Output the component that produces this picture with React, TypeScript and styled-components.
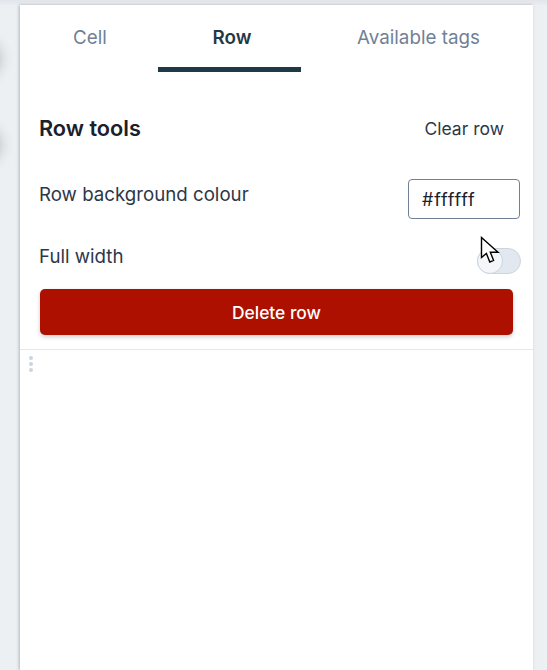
import { createGlobalStyle, styled } from 'styled-components'

const tabs = [
  { label: 'Cell', width: 138, indent: 2 },
  { label: 'Row', width: 143, indent: 5 },
  { label: 'Available tags', width: 232, indent: 3 },
]

function CursorIcon() {
  return (
    <Cursor width="22" height="30" viewBox="0 0 22 30" aria-hidden="true">
      <path
        d="M1.5 1.5 L1.5 21.5 L6.4 17.4 L9.8 26 L13.6 24.4 L10.3 16.2 L18 16.2 Z"
        fill="#ffffff"
        stroke="#000000"
        strokeWidth="1.4"
        strokeLinejoin="miter"
      />
    </Cursor>
  )
}

export default function App() {
  return (
    <>
      <GlobalStyle />
      <Page>
        <TopEdge />
        <Blob $top={46} />
        <Blob $top={132} />
        <Panel>
          <TabBar>
            {tabs.map((tab) => (
              <Tab
                key={tab.label}
                $width={tab.width}
                $indent={tab.indent}
                $active={tab.label === 'Row'}
              >
                {tab.label}
              </Tab>
            ))}
          </TabBar>
          <Tools>
            <ToolsHeader>
              <Heading>Row tools</Heading>
              <ClearButton type="button">Clear row</ClearButton>
            </ToolsHeader>
            <ColourRow>
              <FieldLabel>Row background colour</FieldLabel>
              <ColourInput readOnly value="#ffffff" />
            </ColourRow>
            <WidthRow>
              <FieldLabel>Full width</FieldLabel>
              <Switch>
                <Knob />
                <CursorIcon />
              </Switch>
            </WidthRow>
            <DeleteButton type="button">Delete row</DeleteButton>
          </Tools>
          <RowArea>
            <DragHandle>
              <Dot />
              <Dot />
              <Dot />
            </DragHandle>
          </RowArea>
        </Panel>
      </Page>
    </>
  )
}

const GlobalStyle = createGlobalStyle`
  html, body {
    margin: 0;
    padding: 0;
    height: 100%;
    overflow: hidden;
  }

  body {
    font-family: Inter, "Liberation Sans", sans-serif;
    background: #ecf0f3;
  }
`

const Page = styled.div`
  position: relative;
  height: 670px;
  padding: 5px 14px 0 20px;
  box-sizing: border-box;
  overflow: hidden;
  background: #ecf0f3;
`

const TopEdge = styled.div`
  position: absolute;
  inset: 0 0 auto 0;
  height: 5px;
  background: linear-gradient(#e2e5e9, #e9ecf0);
`

const Blob = styled.div<{ $top: number }>`
  position: absolute;
  left: -30px;
  top: ${({ $top }) => $top}px;
  width: 26px;
  height: 26px;
  border-radius: 50%;
  box-shadow: 0 0 14px 4px rgba(60, 60, 60, 0.32);
`

const Panel = styled.main`
  position: relative;
  height: 100%;
  background: #ffffff;
  box-shadow: -1px 0 3px rgba(70, 80, 95, 0.35);
`

const TabBar = styled.nav`
  display: flex;
  height: 67px;
`

const Tab = styled.div<{ $width: number; $indent: number; $active: boolean }>`
  box-sizing: border-box;
  width: ${({ $width }) => $width}px;
  height: 67px;
  padding-left: ${({ $indent }) => $indent}px;
  line-height: 65px;
  text-align: center;
  font-size: 18.8px;
  font-weight: ${({ $active }) => ($active ? 600 : 400)};
  color: ${({ $active }) => ($active ? '#1f3a47' : '#718096')};
  border-bottom: 5px solid ${({ $active }) => ($active ? '#1f3a47' : 'transparent')};
`

const Tools = styled.section`
  display: flex;
  flex-direction: column;
  padding: 5px 13px 14px 19px;
  border-bottom: 1px solid #e2e8f0;
`

const ToolsHeader = styled.div`
  display: flex;
  align-items: center;
  justify-content: space-between;
  height: 102px;
  padding-right: 16px;
`

const Heading = styled.h2`
  margin: 0;
  font-size: 21.7px;
  font-weight: 600;
  color: #1a202c;
`

const ClearButton = styled.button`
  padding: 0;
  border: 0;
  background: none;
  font: inherit;
  font-size: 17.5px;
  color: #2d3748;
`

const ColourRow = styled.div`
  display: flex;
  align-items: flex-start;
  justify-content: space-between;
`

const FieldLabel = styled.span`
  font-size: 18.7px;
  line-height: 32px;
  color: #2d3748;
`

const ColourInput = styled.input`
  box-sizing: border-box;
  width: 112px;
  height: 40px;
  padding: 0 13px;
  border: 1px solid #718096;
  border-radius: 4px;
  outline: none;
  font: inherit;
  font-size: 18px;
  letter-spacing: 0.8px;
  color: #1a202c;
`

const WidthRow = styled.div`
  display: flex;
  align-items: center;
  justify-content: space-between;
  height: 30px;
  margin-top: 23px;
  margin-bottom: 17px;
`

const Switch = styled.div`
  position: relative;
  box-sizing: border-box;
  width: 44px;
  height: 26px;
  margin: 8px -1px 0 0;
  border: 1px solid #cbd5e0;
  border-radius: 13px;
  background: #e2e8f0;
`

const Knob = styled.div`
  box-sizing: border-box;
  width: 26px;
  height: 26px;
  margin: -1px 0 0 -1px;
  border-radius: 50%;
  border: 1px solid #cbd5e0;
  background: #f4f6f9;
`

const Cursor = styled.svg`
  position: absolute;
  left: 2px;
  top: -13px;
`

const DeleteButton = styled.button`
  height: 46px;
  margin: 0 7px 0 1px;
  border: 0;
  border-radius: 5px;
  background: #ae1000;
  box-shadow: 0 2px 4px rgba(0, 0, 0, 0.2);
  font: inherit;
  font-size: 17.4px;
  font-weight: 500;
  color: #ffffff;
`

const RowArea = styled.div`
  padding: 6px 0 0 9px;
`

const DragHandle = styled.div`
  display: flex;
  flex-direction: column;
  gap: 2px;
  width: 4px;
`

const Dot = styled.span`
  width: 4px;
  height: 4px;
  border-radius: 50%;
  background: #cbd5e0;
`
